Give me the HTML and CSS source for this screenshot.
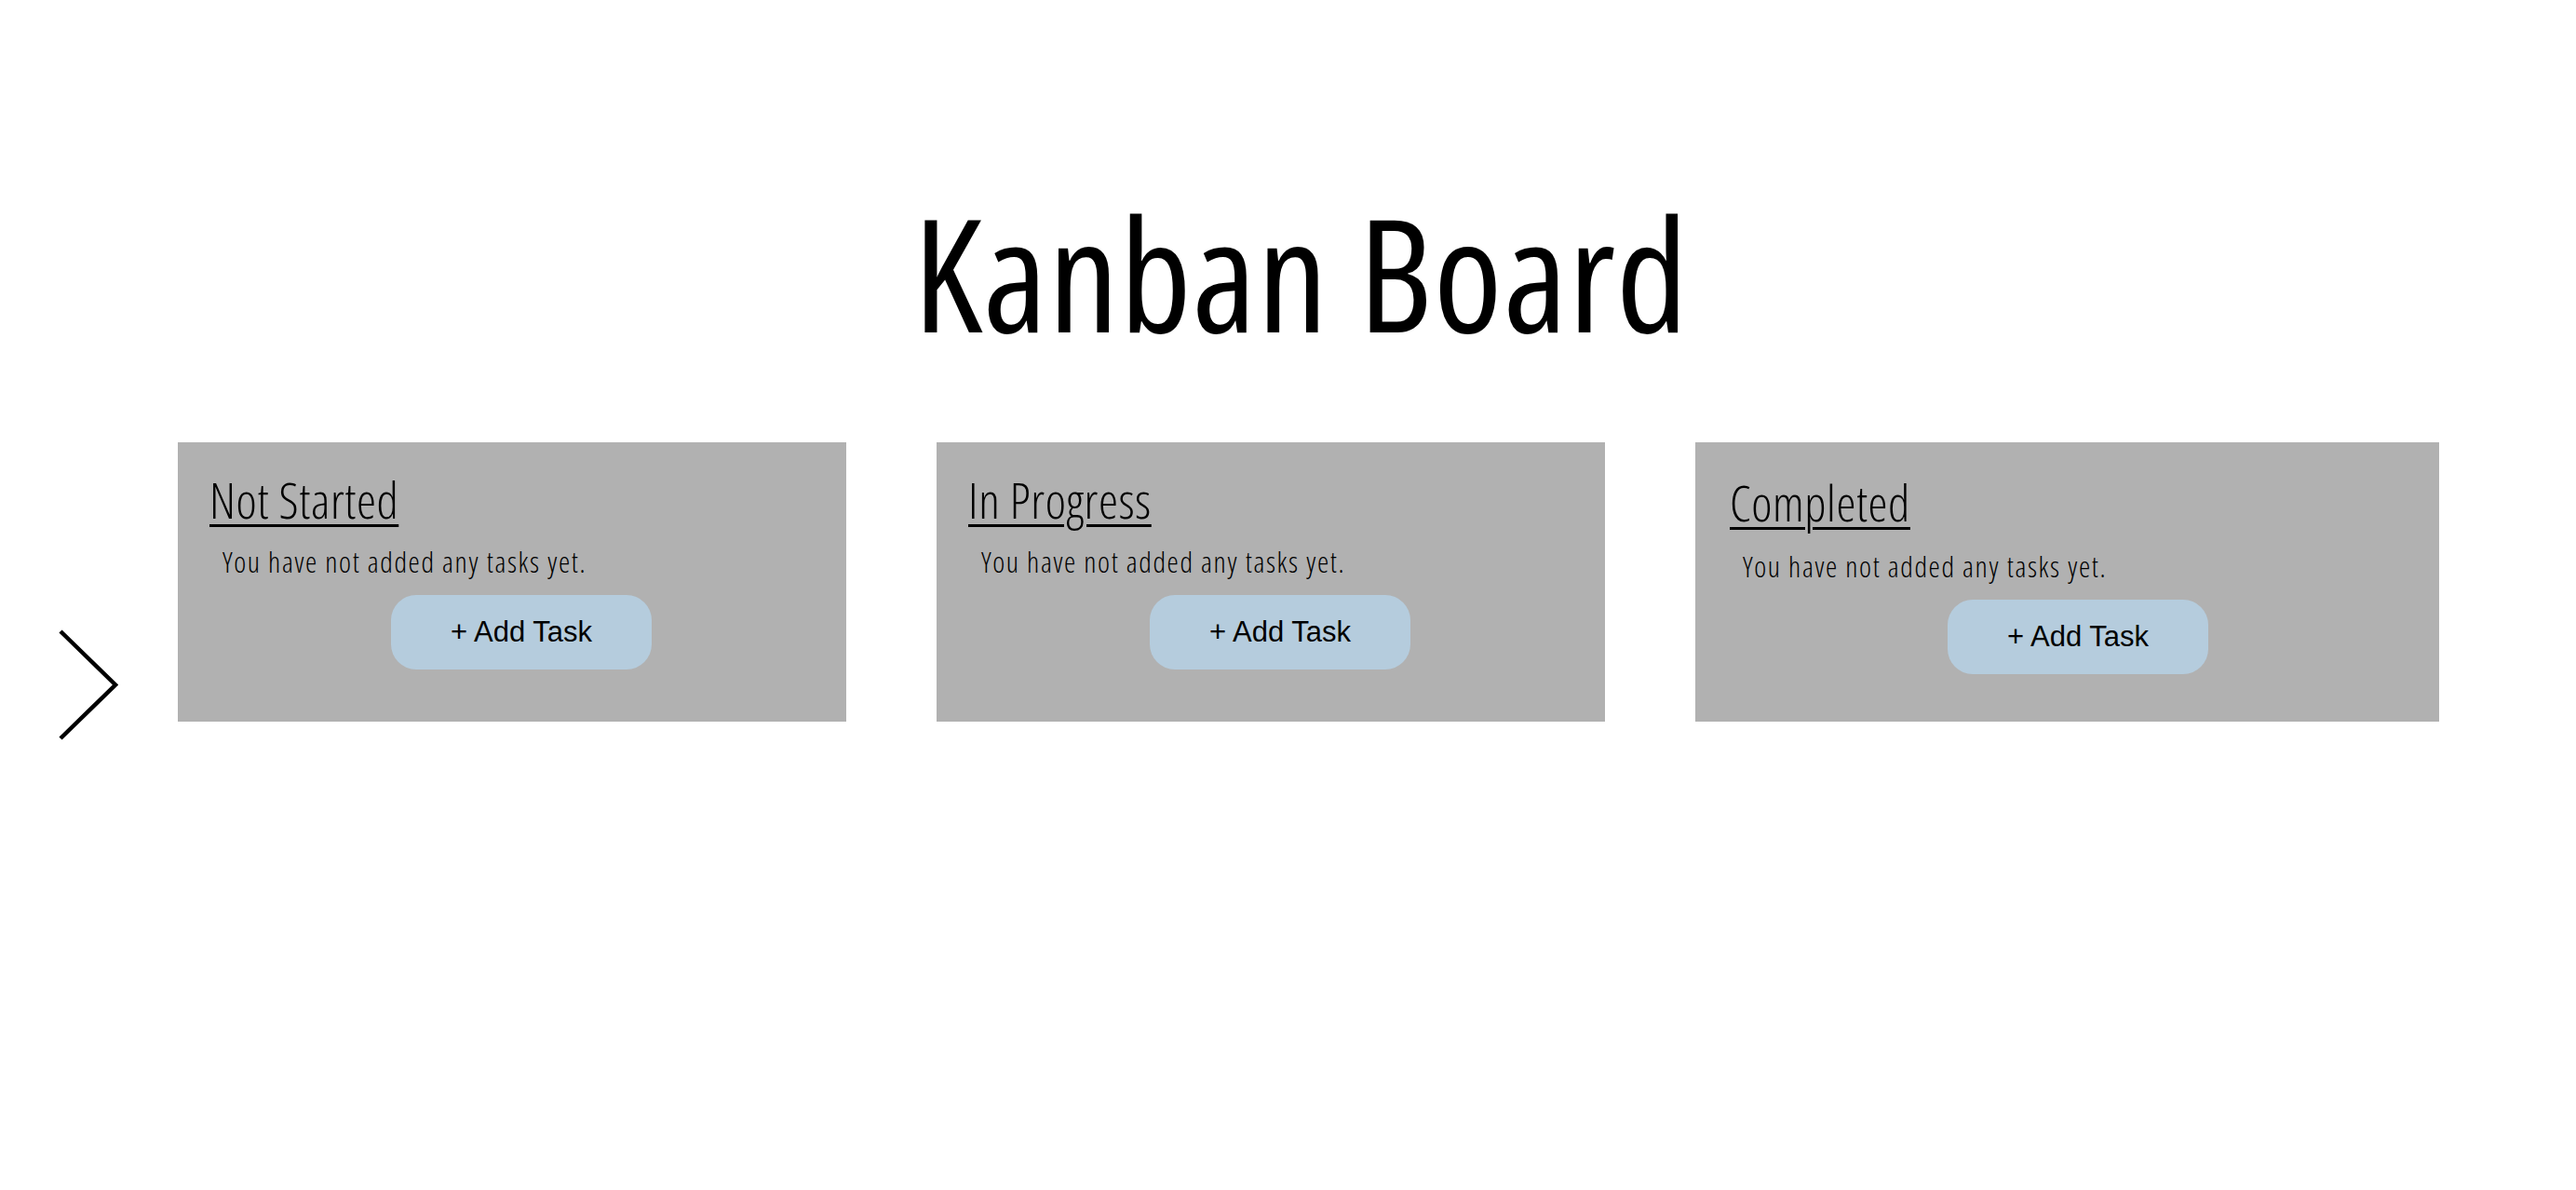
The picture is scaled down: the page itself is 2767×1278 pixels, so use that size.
FILE: index.html
```html
<!DOCTYPE html>
<html lang="en">
<head>
<meta charset="utf-8">
<title>Kanban Board</title>
<link rel="stylesheet" href="styles.css">
</head>
<body>
<header class="header">
  <h1 class="title">Kanban Board</h1>
</header>
<main class="board">
  <svg class="nav-arrow" viewBox="0 0 64 119" width="64" height="119" aria-hidden="true">
    <polyline points="2,2 61,59.5 2,117" fill="none" stroke="#000" stroke-width="4.5" stroke-linejoin="miter"/>
  </svg>
  <div class="columns">
    <section class="column column-narrow">
      <h2 class="column-title">Not Started</h2>
      <p class="column-empty">You have not added any tasks yet.</p>
      <div class="column-actions"><button class="add-btn">+ Add Task</button></div>
    </section>
    <section class="column column-narrow">
      <h2 class="column-title">In Progress</h2>
      <p class="column-empty">You have not added any tasks yet.</p>
      <div class="column-actions"><button class="add-btn">+ Add Task</button></div>
    </section>
    <section class="column column-wide">
      <h2 class="column-title">Completed</h2>
      <p class="column-empty">You have not added any tasks yet.</p>
      <div class="column-actions"><button class="add-btn">+ Add Task</button></div>
    </section>
  </div>
</main>
</body>
</html>
```

FILE: styles.css
```css
html, body {
  margin: 0;
  padding: 0;
  background: #ffffff;
  color: #000000;
}

body {
  font-family: "Open Sans", "DejaVu Sans", sans-serif;
  font-stretch: 75%;
}

.header {
  padding-top: 208px;
  padding-left: 28px;
  text-align: center;
}

.title {
  margin: 0;
  font-size: 168px;
  line-height: 168px;
  font-weight: 500;
  font-stretch: 75%;
  letter-spacing: 1px;
}

.board {
  display: flex;
  align-items: flex-start;
  margin-top: 99px;
  padding-left: 63px;
  gap: 64px;
}

.nav-arrow {
  display: block;
  margin-top: 201px;
  flex: none;
}

.columns {
  display: flex;
  align-items: stretch;
  gap: 97px;
}

.column {
  background: #b1b1b1;
  box-sizing: border-box;
  padding: 35px 34px 57px 34px;
  height: 300px;
}

.column-narrow {
  width: 718px;
}

.column-wide {
  width: 799px;
  padding-top: 38px;
  padding-left: 37px;
}

.column-title {
  margin: 0;
  font-size: 53px;
  line-height: 53px;
  font-weight: 300;
  font-stretch: 75%;
  letter-spacing: 0.6px;
  text-decoration: underline;
  text-decoration-thickness: 3px;
  text-underline-offset: 6px;
}

.column-empty {
  margin: 22px 0 0 14px;
  font-size: 31px;
  line-height: 37px;
  font-weight: 300;
  font-stretch: 75%;
  letter-spacing: 1.6px;
}

.column-wide .column-empty {
  margin-top: 24px;
}

.column-actions {
  display: flex;
  justify-content: center;
  padding-left: 20px;
  margin-top: 17px;
}

.add-btn {
  width: 280px;
  height: 80px;
  border: none;
  border-radius: 27px;
  background: #b5ccdd;
  color: #000;
  font-family: "Liberation Sans", Arial, sans-serif;
  font-stretch: normal;
  font-size: 31px;
  padding: 0;
}
```
